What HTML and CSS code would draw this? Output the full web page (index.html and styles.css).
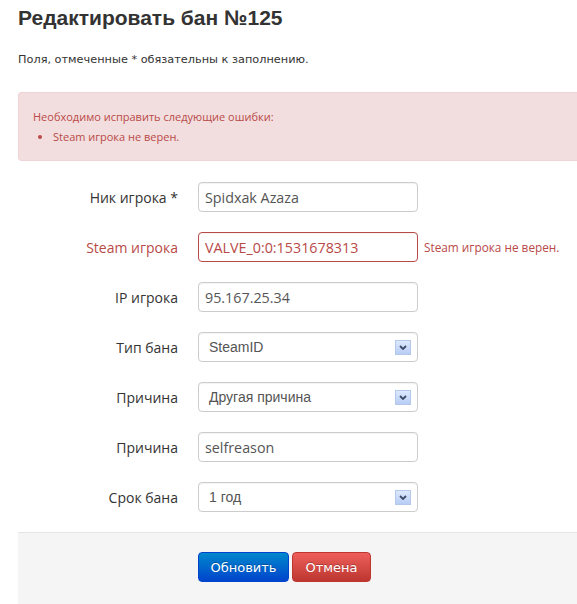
FILE: index.html
```html
<!DOCTYPE html>
<html lang="ru">
<head>
  <meta charset="UTF-8">
  <title>Редактировать бан №125</title>
  <link rel="stylesheet" href="styles.css">
</head>
<body>
  <h1 class="page-title">Редактировать бан №125</h1>
  <p class="note">Поля, отмеченные * обязательны к заполнению.</p>

  <div class="alert-error">
    <p>Необходимо исправить следующие ошибки:</p>
    <ul>
      <li>Steam игрока не верен.</li>
    </ul>
  </div>

  <form class="ban-form">
    <div class="control-group">
      <label class="control-label">Ник игрока *</label>
      <div class="control"><input type="text" value="Spidxak Azaza"></div>
    </div>
    <div class="control-group error">
      <label class="control-label">Steam игрока</label>
      <div class="control">
        <input type="text" value="VALVE_0:0:1531678313">
        <span class="help-inline">Steam игрока не верен.</span>
      </div>
    </div>
    <div class="control-group">
      <label class="control-label">IP игрока</label>
      <div class="control"><input type="text" value="95.167.25.34"></div>
    </div>
    <div class="control-group">
      <label class="control-label">Тип бана</label>
      <div class="control"><div class="select"><span>SteamID</span><i class="arrow"><svg width="8" height="5" viewBox="0 0 8 5"><path d="M1 1 L4 4 L7 1" fill="none" stroke="#3b4a66" stroke-width="1.8"/></svg></i></div></div>
    </div>
    <div class="control-group">
      <label class="control-label">Причина</label>
      <div class="control"><div class="select"><span>Другая причина</span><i class="arrow"><svg width="8" height="5" viewBox="0 0 8 5"><path d="M1 1 L4 4 L7 1" fill="none" stroke="#3b4a66" stroke-width="1.8"/></svg></i></div></div>
    </div>
    <div class="control-group">
      <label class="control-label">Причина</label>
      <div class="control"><input type="text" value="selfreason"></div>
    </div>
    <div class="control-group">
      <label class="control-label">Срок бана</label>
      <div class="control"><div class="select"><span>1 год</span><i class="arrow"><svg width="8" height="5" viewBox="0 0 8 5"><path d="M1 1 L4 4 L7 1" fill="none" stroke="#3b4a66" stroke-width="1.8"/></svg></i></div></div>
    </div>

    <div class="form-actions">
      <button type="button" class="btn btn-primary">Обновить</button>
      <button type="button" class="btn btn-danger">Отмена</button>
    </div>
  </form>
</body>
</html>
```

FILE: styles.css
```css
body {
  margin: 0;
  padding: 0 0 0 18px;
  font-family: "Open Sans", sans-serif;
  color: #333;
  background: #fff;
  overflow: hidden;
}

.page-title {
  margin: 0;
  padding-top: 3px;
  font-family: "Liberation Sans", Arial, sans-serif;
  font-size: 21px;
  font-weight: bold;
  line-height: 30px;
  color: #333;
}

.note {
  margin: 19px 0 0;
  font-family: "DejaVu Sans", sans-serif;
  font-size: 11.3px;
  line-height: 16px;
}

.alert-error {
  margin-top: 24px;
  padding: 14px 14px 13px;
  background: #f2dede;
  border: 1px solid #eed3d7;
  border-right: none;
  border-radius: 4px 0 0 4px;
  color: #b94a48;
  font-size: 11px;
  line-height: 20px;
}

.alert-error p {
  margin: 0;
}

.alert-error ul {
  margin: 0;
  padding-left: 20px;
}

.ban-form {
  margin-top: 21px;
  display: flex;
  flex-direction: column;
  gap: 20px;
}

.control-group {
  display: flex;
  align-items: center;
  gap: 20px;
}

.control-label {
  width: 160px;
  text-align: right;
  font-size: 14px;
  color: #333;
}

.control {
  display: flex;
  align-items: center;
  gap: 6px;
}

.control input,
.select {
  box-sizing: border-box;
  width: 220px;
  height: 30px;
  padding: 0 6px;
  border: 1px solid #ccc;
  border-radius: 4px;
  font-family: "Open Sans", sans-serif;
  font-size: 14.3px;
  color: #555;
  background: #fff;
  box-shadow: inset 0 1px 1px rgba(0, 0, 0, 0.05);
}

.error .control-label,
.error .help-inline,
.error .control input {
  color: #b94a48;
}

.error .control input {
  border-color: #b94a48;
}

.help-inline {
  font-size: 11.8px;
}

.select {
  display: flex;
  align-items: center;
  justify-content: space-between;
  padding: 0 6px 0 10px;
  font-family: "Liberation Sans", Arial, sans-serif;
  font-size: 14px;
}

.arrow {
  display: flex;
  align-items: center;
  justify-content: center;
  width: 16px;
  height: 15px;
  border: 1px solid #b4c8ec;
  box-sizing: border-box;
  background: linear-gradient(#dce8fd, #b8cdf5);
}

.form-actions {
  padding: 19px 0 22px 180px;
  background: #f5f5f5;
  border-top: 1px solid #e5e5e5;
  display: flex;
  gap: 3px;
  height: 40px;
}

.btn {
  height: 30px;
  padding: 0 11px;
  border-radius: 4px;
  font-family: "DejaVu Sans", sans-serif;
  font-size: 13px;
  color: #fff;
  cursor: pointer;
  text-shadow: 0 -1px 0 rgba(0, 0, 0, 0.25);
}

.btn-primary {
  width: 91px;
  background: linear-gradient(#0088cc, #0044cc);
  border: 1px solid #0044cc;
}

.btn-danger {
  width: 79px;
  background: linear-gradient(#ee5f5b, #bd362f);
  border: 1px solid #bd362f;
}
```
